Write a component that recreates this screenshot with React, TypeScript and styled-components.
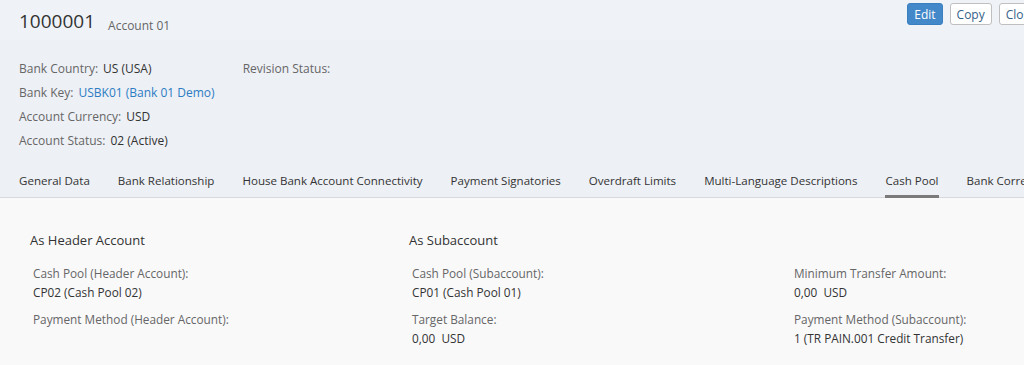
import React from "react";
import styled, { createGlobalStyle } from "styled-components";

const GlobalStyle = createGlobalStyle`
  html, body {
    margin: 0;
    padding: 0;
    overflow: hidden;
    background: #f9f9fa;
  }
  body {
    font-family: "Open Sans", "Noto Sans", Arial, sans-serif;
    color: #333;
  }
`;

const Page = styled.div`
  width: 1059px;
`;

const Header = styled.header`
  background: #edf0f5;
`;

const TitleBar = styled.div`
  display: flex;
  justify-content: space-between;
  align-items: flex-start;
  padding: 3px 16px 0 19px;
  height: 37px;
  background: #eff3f8;
`;

const TitleGroup = styled.div`
  display: flex;
  align-items: baseline;
  gap: 13px;
  padding-top: 5px;
`;

const Title = styled.h1`
  margin: 0;
  font-size: 19px;
  font-weight: 400;
  color: #333;
`;

const Subtitle = styled.span`
  font-size: 12px;
  color: #666;
  position: relative;
  top: 2px;
`;

const Actions = styled.div`
  display: flex;
  gap: 7px;
`;

const Button = styled.button<{ $primary?: boolean }>`
  height: 22px;
  padding: 0 6px;
  font-family: inherit;
  font-size: 12px;
  border-radius: 3px;
  border: 1px solid ${(p) => (p.$primary ? "#3a7fc0" : "#bfbfbf")};
  background: ${(p) => (p.$primary ? "#4388c8" : "#fff")};
  color: ${(p) => (p.$primary ? "#fff" : "#346187")};
`;

const HeaderBody = styled.div`
  display: flex;
  gap: 28px;
  padding: 20px 19px 12px;
`;

const FieldList = styled.div`
  display: flex;
  flex-direction: column;
  gap: 7px;
`;

const HeaderField = styled.div`
  display: flex;
  gap: 5px;
  font-size: 12px;
  line-height: 17px;
`;

const Label = styled.span`
  color: #666;
`;

const Value = styled.span<{ $link?: boolean }>`
  color: ${(p) => (p.$link ? "#2c7cc3" : "#333")};
`;

const TabBar = styled.nav`
  display: flex;
  gap: 28px;
  padding: 0 19px;
  height: 36px;
  background: #edf0f5;
  border-bottom: 1px solid #d7d9dc;
  white-space: nowrap;
`;

const Tab = styled.div<{ $active?: boolean }>`
  display: flex;
  align-items: center;
  font-size: 11.55px;
  color: #333;
  padding-top: 5px;
  border-bottom: 3px solid ${(p) => (p.$active ? "#7a7a7a" : "transparent")};
  margin-bottom: -1px;
`;

const Content = styled.main`
  display: grid;
  grid-template-columns: 379px 382px 300px;
  padding: 33px 0 0 30px;
`;

const Column = styled.section`
  display: flex;
  flex-direction: column;
`;

const SectionTitle = styled.h2`
  margin: 0 0 15px;
  height: 18px;
  font-size: 13px;
  font-weight: 400;
  color: #333;
  line-height: 18px;
`;

const FormField = styled.div`
  display: flex;
  flex-direction: column;
  padding-left: 3px;
  margin-bottom: 8px;
  font-size: 11.8px;
  line-height: 19px;
`;

const headerFields = [
  { label: "Bank Country:", value: "US (USA)" },
  { label: "Bank Key:", value: "USBK01 (Bank 01 Demo)", link: true },
  { label: "Account Currency:", value: "USD" },
  { label: "Account Status:", value: "02 (Active)" },
];

const tabs = [
  "General Data",
  "Bank Relationship",
  "House Bank Account Connectivity",
  "Payment Signatories",
  "Overdraft Limits",
  "Multi-Language Descriptions",
  "Cash Pool",
  "Bank Correspondence",
];

const columns = [
  {
    title: "As Header Account",
    fields: [
      { label: "Cash Pool (Header Account):", value: "CP02 (Cash Pool 02)" },
      { label: "Payment Method (Header Account):", value: "" },
    ],
  },
  {
    title: "As Subaccount",
    fields: [
      { label: "Cash Pool (Subaccount):", value: "CP01 (Cash Pool 01)" },
      { label: "Target Balance:", value: "0,00\u00a0\u00a0USD" },
    ],
  },
  {
    title: "",
    fields: [
      { label: "Minimum Transfer Amount:", value: "0,00\u00a0\u00a0USD" },
      { label: "Payment Method (Subaccount):", value: "1 (TR PAIN.001 Credit Transfer)" },
    ],
  },
];

export default function App() {
  return (
    <Page>
      <GlobalStyle />
      <Header>
        <TitleBar>
          <TitleGroup>
            <Title>1000001</Title>
            <Subtitle>Account 01</Subtitle>
          </TitleGroup>
          <Actions>
            <Button $primary>Edit</Button>
            <Button>Copy</Button>
            <Button>Close</Button>
          </Actions>
        </TitleBar>
        <HeaderBody>
          <FieldList>
            {headerFields.map((f) => (
              <HeaderField key={f.label}>
                <Label>{f.label}</Label>
                <Value $link={f.link}>{f.value}</Value>
              </HeaderField>
            ))}
          </FieldList>
          <FieldList>
            <HeaderField>
              <Label>Revision Status:</Label>
            </HeaderField>
          </FieldList>
        </HeaderBody>
      </Header>
      <TabBar>
        {tabs.map((t) => (
          <Tab key={t} $active={t === "Cash Pool"}>
            {t}
          </Tab>
        ))}
      </TabBar>
      <Content>
        {columns.map((c, i) => (
          <Column key={i}>
            <SectionTitle>{c.title}</SectionTitle>
            {c.fields.map((f) => (
              <FormField key={f.label}>
                <Label>{f.label}</Label>
                {f.value && <Value>{f.value}</Value>}
              </FormField>
            ))}
          </Column>
        ))}
      </Content>
    </Page>
  );
}
